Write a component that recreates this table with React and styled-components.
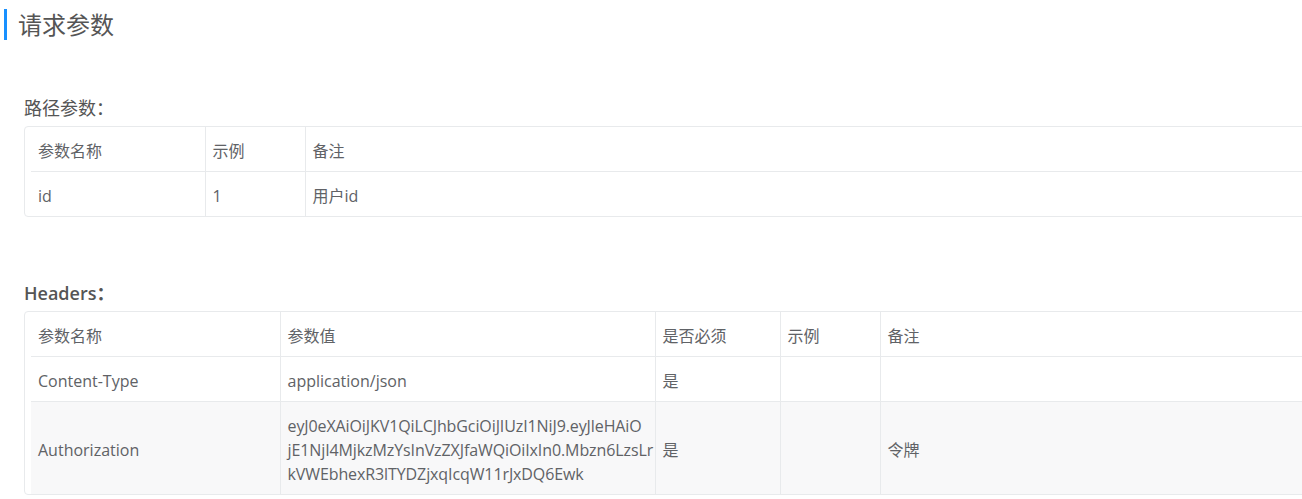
import React from "react";
import styled, { createGlobalStyle } from "styled-components";

const Global = createGlobalStyle`
  html, body {
    margin: 0;
    padding: 0;
    background: #fff;
    overflow: hidden;
  }
  body {
    font-family: "Open Sans", "Noto Sans CJK SC", sans-serif;
    color: #606266;
  }
`;

const Page = styled.div`
  padding: 9px 0 0 4px;
  width: 1500px;
`;

const Title = styled.h2`
  margin: 0;
  font-size: 24px;
  line-height: 31px;
  font-weight: 400;
  color: #555;
  border-left: 3px solid #1890ff;
  padding-left: 11px;
`;

const Section = styled.section`
  margin: ${(p) => p.$top}px 0 0 20px;
`;

const Label = styled.div`
  font-size: 18px;
  line-height: 24px;
  color: #555;
  font-weight: ${(p) => (p.$bold ? 600 : 400)};
  margin-bottom: 6px;
`;

const Card = styled.div`
  border: 1px solid #e8eaec;
  border-radius: 4px;
  padding-left: 6px;
  width: 1400px;
  overflow: hidden;
`;

const Table = styled.table`
  width: 100%;
  border-collapse: collapse;
  table-layout: fixed;
  font-size: 16px;
  line-height: 24px;
`;

const Row = styled.tr`
  background: ${(p) => (p.$striped ? "#f8f8f9" : "#fff")};
  border-bottom: 1px solid #e8eaec;
  &:last-child {
    border-bottom: none;
  }
`;

const Cell = styled.td`
  padding: 12px 7px 8px;
  text-align: left;
  vertical-align: middle;
  color: #606266;
  font-weight: 400;
  & + & {
    border-left: 1px solid #e8eaec;
  }
`;

const HeadCell = styled(Cell).attrs({ as: "th" })``;

const TokenLine = styled.span`
  display: block;
  white-space: nowrap;
  letter-spacing: -0.1px;
`;

const pathCols = [174, 100, null];
const headerCols = [249, 375, 125, 100, null];

function Cols({ widths }) {
  return (
    <colgroup>
      {widths.map((w, i) => (
        <col key={i} style={w ? { width: w } : undefined} />
      ))}
    </colgroup>
  );
}

export default function App() {
  return (
    <>
      <Global />
      <Page>
        <Title>请求参数</Title>

        <Section $top={56}>
          <Label>路径参数：</Label>
          <Card>
            <Table>
              <Cols widths={pathCols} />
              <tbody>
                <Row>
                  <HeadCell>参数名称</HeadCell>
                  <HeadCell>示例</HeadCell>
                  <HeadCell>备注</HeadCell>
                </Row>
                <Row>
                  <Cell>id</Cell>
                  <Cell>1</Cell>
                  <Cell>用户id</Cell>
                </Row>
              </tbody>
            </Table>
          </Card>
        </Section>

        <Section $top={64}>
          <Label $bold>Headers：</Label>
          <Card>
            <Table>
              <Cols widths={headerCols} />
              <tbody>
                <Row>
                  <HeadCell>参数名称</HeadCell>
                  <HeadCell>参数值</HeadCell>
                  <HeadCell>是否必须</HeadCell>
                  <HeadCell>示例</HeadCell>
                  <HeadCell>备注</HeadCell>
                </Row>
                <Row>
                  <Cell>Content-Type</Cell>
                  <Cell>application/json</Cell>
                  <Cell>是</Cell>
                  <Cell></Cell>
                  <Cell></Cell>
                </Row>
                <Row $striped>
                  <Cell>Authorization</Cell>
                  <Cell>
                    <TokenLine>eyJ0eXAiOiJKV1QiLCJhbGciOiJIUzI1NiJ9.eyJleHAiO</TokenLine>
                    <TokenLine>jE1NjI4MjkzMzYsInVzZXJfaWQiOiIxIn0.Mbzn6LzsLr</TokenLine>
                    <TokenLine>kVWEbhexR3lTYDZjxqIcqW11rJxDQ6Ewk</TokenLine>
                  </Cell>
                  <Cell>是</Cell>
                  <Cell></Cell>
                  <Cell>令牌</Cell>
                </Row>
              </tbody>
            </Table>
          </Card>
        </Section>
      </Page>
    </>
  );
}
